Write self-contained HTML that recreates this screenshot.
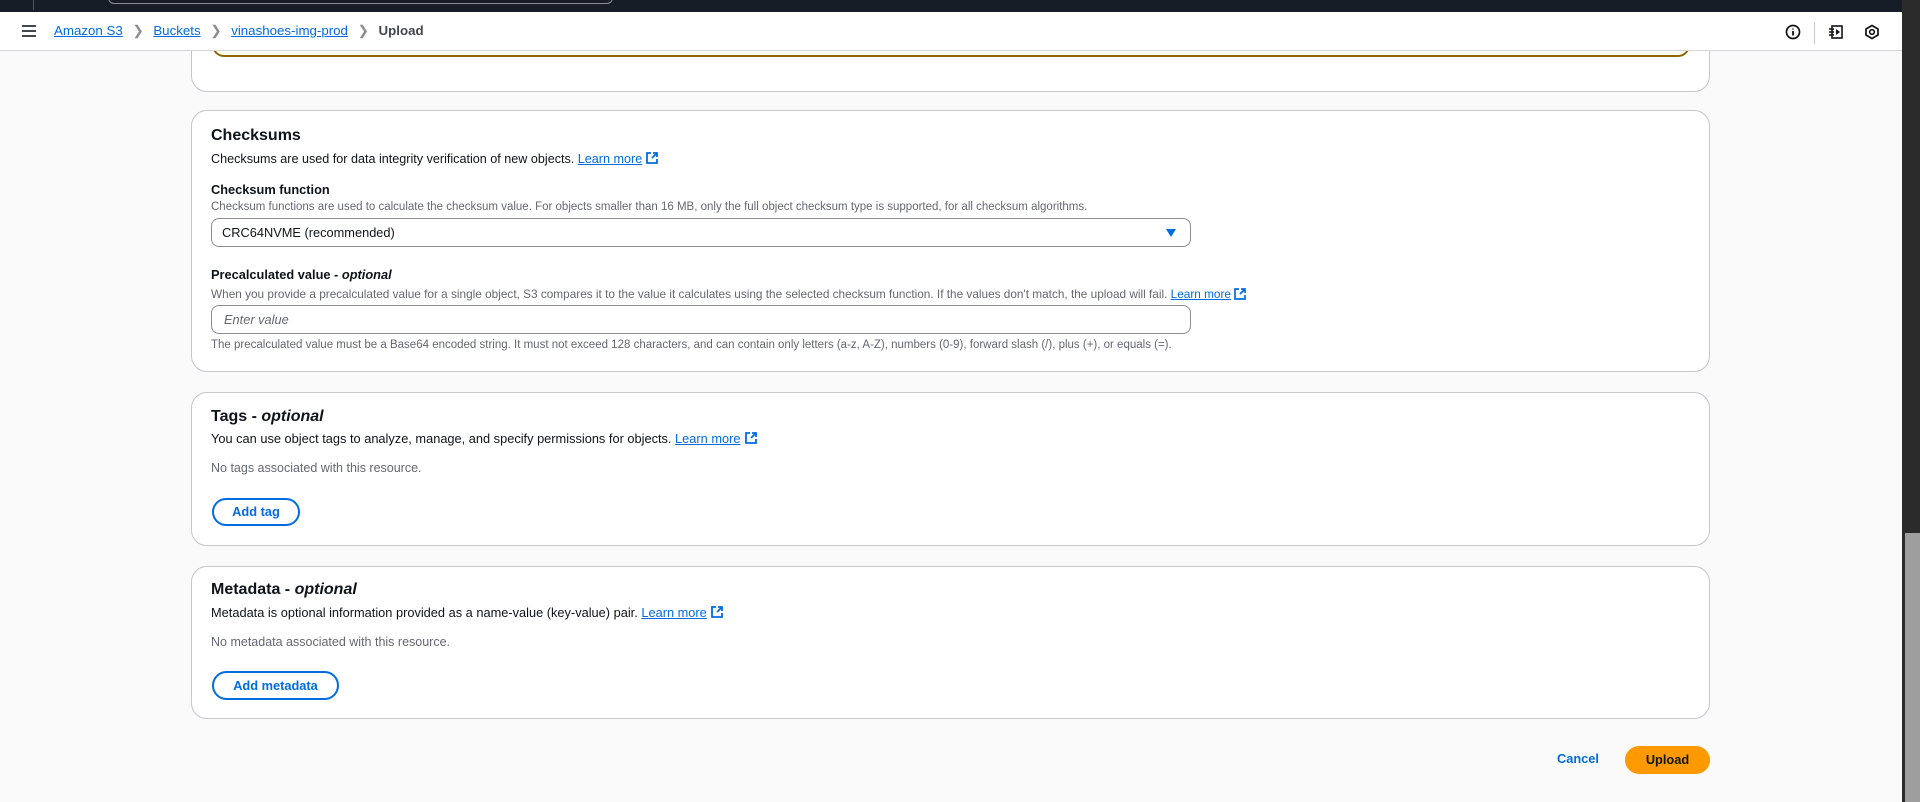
<!DOCTYPE html>
<html><head><meta charset="utf-8"><style>
*{box-sizing:border-box;margin:0;padding:0}
body{width:1920px;height:802px;overflow:hidden;background:#fafafa;font-family:"Liberation Sans",sans-serif;color:#0f141a;position:relative}
.a{position:absolute;white-space:nowrap}
.card{position:absolute;left:191px;width:1519px;background:#fff;border:1px solid #c6c6cd;border-radius:16px}
.h{font-size:16px;font-weight:bold}
.d{font-size:13.3px;color:#0f141a}
.s{font-size:11.5px;color:#656871}
.g{font-size:13px;color:#656871}
.l{color:#006ce0;text-decoration:underline}
.ext{display:inline-block;vertical-align:-2px;margin-left:3px}
.btn{position:absolute;border:2px solid #006ce0;border-radius:20px;color:#006ce0;font-weight:bold;font-size:13.3px;text-align:center;background:#fff}
.field{position:absolute;left:211px;width:980px;border:1px solid #8c8c94;border-radius:8px;background:#fff;font-size:13.3px}
.top{z-index:5}
</style></head><body>
<div class="card" style="top:-20px;height:112px"></div>
<div class="a" style="left:212px;top:40px;width:1478px;height:17px;background:#fffef0;border:2px solid #8d6605;border-top:none;border-radius:0 0 12px 12px"></div>

<div class="a top" style="left:0;top:0;width:1902px;height:12px;background:#161d26"></div>
<div class="a top" style="left:108px;top:-8px;width:505px;height:12px;border:1px solid #8c8c94;border-radius:6px"></div>
<div class="a top" style="left:33px;top:0;width:1px;height:10px;background:#555"></div>
<div class="a top" style="left:0;top:12px;width:1902px;height:39px;background:#fff;border-bottom:1px solid #d5d5d9"></div>
<svg class="a top" style="left:22px;top:25px" width="14" height="12"><path d="M0 1h14M0 6h14M0 11h14" stroke="#424650" stroke-width="2"/></svg>
<div class="a top" style="left:54px;top:23px;font-size:13.3px;color:#0f141a">
<span class="l">Amazon S3</span> <span style="color:#8c8c94;margin:0 6px">❯</span> <span class="l">Buckets</span> <span style="color:#8c8c94;margin:0 6px">❯</span> <span class="l">vinashoes-img-prod</span> <span style="color:#8c8c94;margin:0 6px">❯</span> <b style="color:#424650">Upload</b></div>
<svg class="a top" style="left:1785px;top:24px" width="16" height="16"><circle cx="8" cy="8" r="6.5" fill="none" stroke="#0f141a" stroke-width="1.7"/><path d="M8 7v4.5M8 4.5v1" stroke="#0f141a" stroke-width="1.8"/></svg>
<div class="a top" style="left:1814px;top:22px;width:1px;height:22px;background:#c6c6cd"></div>
<svg class="a top" style="left:1828px;top:24px" width="16" height="16"><rect x="4" y="2" width="10" height="12" fill="none" stroke="#0f141a" stroke-width="1.6"/><path d="M1 5h5M1 8h5M1 11h5" stroke="#0f141a" stroke-width="1.4"/><path d="M8 5l4 3-4 3z" fill="#0f141a"/></svg>
<svg class="a top" style="left:1864px;top:24px" width="16" height="16"><path d="M8 1.5l6 3.5v6l-6 3.5-6-3.5v-6z" fill="none" stroke="#0f141a" stroke-width="1.7"/><circle cx="8" cy="8" r="2.3" fill="none" stroke="#0f141a" stroke-width="1.6"/></svg>

<div class="card" style="top:110px;height:262px"></div>
<div class="a h" style="left:211px;top:127px">Checksums</div>
<div class="a d" style="left:211px;top:151px;font-size:12.6px">Checksums are used for data integrity verification of new objects. <span class="l">Learn more</span><svg class="ext" width="14" height="14"><path d="M6 2H2v10h10V8M8 2h4v4M12 2L7 7" fill="none" stroke="#006ce0" stroke-width="1.8"/></svg></div>
<div class="a" style="left:211px;top:182px;font-size:12.8px;font-weight:bold">Checksum function</div>
<div class="a s" style="left:211px;top:201px">Checksum functions are used to calculate the checksum value. For objects smaller than 16 MB, only the full object checksum type is supported, for all checksum algorithms.</div>
<div class="field" style="top:218px;height:29px;padding:6px 10px;font-size:12.8px">CRC64NVME (recommended)</div>
<svg class="a" style="left:1165px;top:228px" width="12" height="10"><path d="M1 1h10L6 9z" fill="#006ce0"/></svg>
<div class="a" style="left:211px;top:267px;font-size:12.8px;font-weight:bold">Precalculated value - <i>optional</i></div>
<div class="a s" style="left:211px;top:287px;font-size:11.8px">When you provide a precalculated value for a single object, S3 compares it to the value it calculates using the selected checksum function. If the values don't match, the upload will fail. <span class="l" style="color:#006ce0">Learn more</span><svg class="ext" width="13" height="13"><path d="M5 2H1v10h10V8M7 2h4v4M11 2L6 7" fill="none" stroke="#006ce0" stroke-width="1.7"/></svg></div>
<div class="field" style="top:305px;height:29px;padding:6px 12px;color:#656871;font-style:italic;font-size:12.8px">Enter value</div>
<div class="a s" style="left:211px;top:339px">The precalculated value must be a Base64 encoded string. It must not exceed 128 characters, and can contain only letters (a-z, A-Z), numbers (0-9), forward slash (/), plus (+), or equals (=).</div>

<div class="card" style="top:392px;height:154px"></div>
<div class="a h" style="left:211px;top:408px">Tags - <i>optional</i></div>
<div class="a d" style="left:211px;top:431px;font-size:12.8px">You can use object tags to analyze, manage, and specify permissions for objects. <span class="l">Learn more</span><svg class="ext" width="14" height="14"><path d="M6 2H2v10h10V8M8 2h4v4M12 2L7 7" fill="none" stroke="#006ce0" stroke-width="1.8"/></svg></div>
<div class="a g" style="left:211px;top:461px;font-size:12.5px">No tags associated with this resource.</div>
<div class="btn" style="left:212px;top:498px;width:88px;height:28px;line-height:24px;font-size:12.8px">Add tag</div>

<div class="card" style="top:566px;height:153px"></div>
<div class="a h" style="left:211px;top:581px">Metadata - <i>optional</i></div>
<div class="a d" style="left:211px;top:605px;font-size:12.8px">Metadata is optional information provided as a name-value (key-value) pair. <span class="l">Learn more</span><svg class="ext" width="14" height="14"><path d="M6 2H2v10h10V8M8 2h4v4M12 2L7 7" fill="none" stroke="#006ce0" stroke-width="1.8"/></svg></div>
<div class="a g" style="left:211px;top:635px;font-size:12.5px">No metadata associated with this resource.</div>
<div class="btn" style="left:212px;top:671px;width:127px;height:29px;line-height:25px;font-size:12.8px">Add metadata</div>

<div class="a" style="left:1557px;top:751px;font-size:12.8px;font-weight:bold;color:#006ce0">Cancel</div>
<div class="a" style="left:1625px;top:746px;width:85px;height:28px;border-radius:14px;background:#ff9900;font-size:12.8px;font-weight:bold;text-align:center;line-height:28px">Upload</div>

<div class="a top" style="left:1902px;top:0;width:18px;height:802px;background:#2b2b2b"></div>
<div class="a top" style="left:1905px;top:533px;width:15px;height:269px;background:#9e9e9e"></div>
</body></html>
